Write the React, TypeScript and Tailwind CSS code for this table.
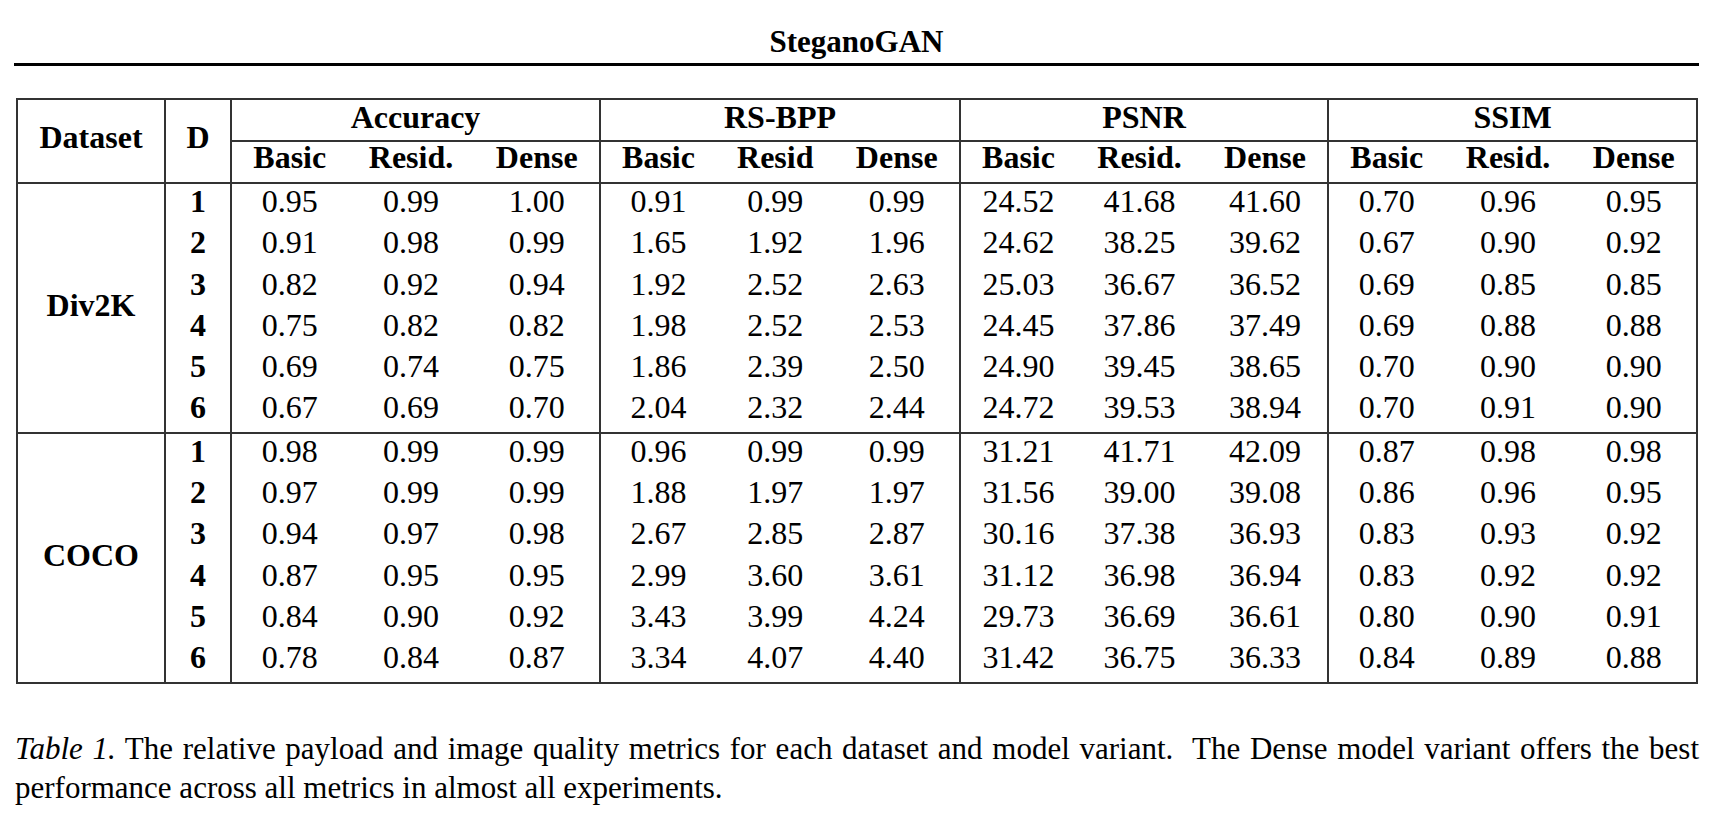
const serif = "font-['Liberation_Serif','Times_New_Roman',serif]";

// hw = header sub-column width, w = body cell width (border included on a group's last cell)
const groups = [
  {
    name: "Accuracy",
    width: "w-[369px] border-r-2",
    cols: [
      { label: "Basic", hw: "w-[115.5px]", w: "w-[115.5px]" },
      { label: "Resid.", hw: "w-[127px]", w: "w-[127px]" },
      { label: "Dense", hw: "flex-1", w: "w-[126.5px] border-r-2" },
    ],
  },
  {
    name: "RS-BPP",
    width: "w-[360px] border-r-2",
    cols: [
      { label: "Basic", hw: "w-[115px]", w: "w-[115px]" },
      { label: "Resid", hw: "w-[118.5px]", w: "w-[118.5px]" },
      { label: "Dense", hw: "flex-1", w: "w-[126.5px] border-r-2" },
    ],
  },
  {
    name: "PSNR",
    width: "w-[368px] border-r-2",
    cols: [
      { label: "Basic", hw: "w-[115px]", w: "w-[115px]" },
      { label: "Resid.", hw: "w-[127px]", w: "w-[127px]" },
      { label: "Dense", hw: "flex-1", w: "w-[126px] border-r-2" },
    ],
  },
  {
    name: "SSIM",
    width: "w-[367px]",
    cols: [
      { label: "Basic", hw: "w-[115.5px]", w: "w-[115.5px]" },
      { label: "Resid.", hw: "w-[127px]", w: "w-[127px]" },
      { label: "Dense", hw: "flex-1", w: "w-[124.5px]" },
    ],
  },
];

const allCols = groups.flatMap((g) => g.cols);

const datasets = [
  {
    name: "Div2K",
    rows: [
      ["0.95", "0.99", "1.00", "0.91", "0.99", "0.99", "24.52", "41.68", "41.60", "0.70", "0.96", "0.95"],
      ["0.91", "0.98", "0.99", "1.65", "1.92", "1.96", "24.62", "38.25", "39.62", "0.67", "0.90", "0.92"],
      ["0.82", "0.92", "0.94", "1.92", "2.52", "2.63", "25.03", "36.67", "36.52", "0.69", "0.85", "0.85"],
      ["0.75", "0.82", "0.82", "1.98", "2.52", "2.53", "24.45", "37.86", "37.49", "0.69", "0.88", "0.88"],
      ["0.69", "0.74", "0.75", "1.86", "2.39", "2.50", "24.90", "39.45", "38.65", "0.70", "0.90", "0.90"],
      ["0.67", "0.69", "0.70", "2.04", "2.32", "2.44", "24.72", "39.53", "38.94", "0.70", "0.91", "0.90"],
    ],
  },
  {
    name: "COCO",
    rows: [
      ["0.98", "0.99", "0.99", "0.96", "0.99", "0.99", "31.21", "41.71", "42.09", "0.87", "0.98", "0.98"],
      ["0.97", "0.99", "0.99", "1.88", "1.97", "1.97", "31.56", "39.00", "39.08", "0.86", "0.96", "0.95"],
      ["0.94", "0.97", "0.98", "2.67", "2.85", "2.87", "30.16", "37.38", "36.93", "0.83", "0.93", "0.92"],
      ["0.87", "0.95", "0.95", "2.99", "3.60", "3.61", "31.12", "36.98", "36.94", "0.83", "0.92", "0.92"],
      ["0.84", "0.90", "0.92", "3.43", "3.99", "4.24", "29.73", "36.69", "36.61", "0.80", "0.90", "0.91"],
      ["0.78", "0.84", "0.87", "3.34", "4.07", "4.40", "31.42", "36.75", "36.33", "0.84", "0.89", "0.88"],
    ],
  },
];

const App = () => {
  return (
    <div className={`bg-white text-black ${serif} pl-[14px] pt-[25px]`}>
      <div className="w-[1685px]">
        {/* Title + rule */}
        <div className="text-center text-[31px] leading-[34px] font-bold">SteganoGAN</div>
        <div className="mt-[4px] h-[3px] bg-black" />

        {/* Table */}
        <div className="mt-[32px] ml-[2px] w-[1682px] border-2 border-[#333] text-[32px]">
          {/* Header */}
          <div className="flex border-b-2 border-[#333] font-bold">
            <div className="w-[148px] h-[82px] border-r-2 border-[#333] pt-[20px] text-center leading-[34.4px]">
              Dataset
            </div>
            <div className="w-[66px] h-[82px] border-r-2 border-[#333] pt-[20px] text-center leading-[34.4px]">
              D
            </div>
            {groups.map((g) => (
              <div key={g.name} className={`${g.width} border-[#333] flex flex-col`}>
                <div className="h-[42px] border-b-2 border-[#333] text-center leading-[34.4px]">{g.name}</div>
                <div className="flex h-[40px]">
                  {g.cols.map((c, i) => (
                    <div key={i} className={`${c.hw} text-center leading-[31px]`}>
                      {c.label}
                    </div>
                  ))}
                </div>
              </div>
            ))}
          </div>

          {/* Body */}
          {datasets.map((ds, di) => (
            <div
              key={ds.name}
              className={`flex ${di < datasets.length - 1 ? "border-b-2 border-[#333]" : ""}`}
            >
              <div className="w-[148px] border-r-2 border-[#333] pt-[104px] text-center font-bold leading-[34.4px]">
                {ds.name}
              </div>
              <div className="flex flex-col">
                {ds.rows.map((row, ri) => (
                  <div key={ri} className="flex h-[41.3px]">
                    <div className="w-[66px] border-r-2 border-[#333] text-center font-bold leading-[34.4px]">
                      {ri + 1}
                    </div>
                    {row.map((v, ci) => (
                      <div key={ci} className={`${allCols[ci].w} border-[#333] text-center leading-[34.4px]`}>
                        {v}
                      </div>
                    ))}
                  </div>
                ))}
              </div>
            </div>
          ))}
        </div>

        {/* Caption */}
        <div className="mt-[45px] ml-[1px] w-[1684px] text-[31px] leading-[39px]">
          <div className="text-justify [text-align-last:justify]">
            <i>Table 1.</i> The relative payload and image quality metrics for each dataset and model variant.&nbsp; The
            Dense model variant offers the best
          </div>
          <div>performance across all metrics in almost all experiments.</div>
        </div>
      </div>
    </div>
  );
};

export default App;
